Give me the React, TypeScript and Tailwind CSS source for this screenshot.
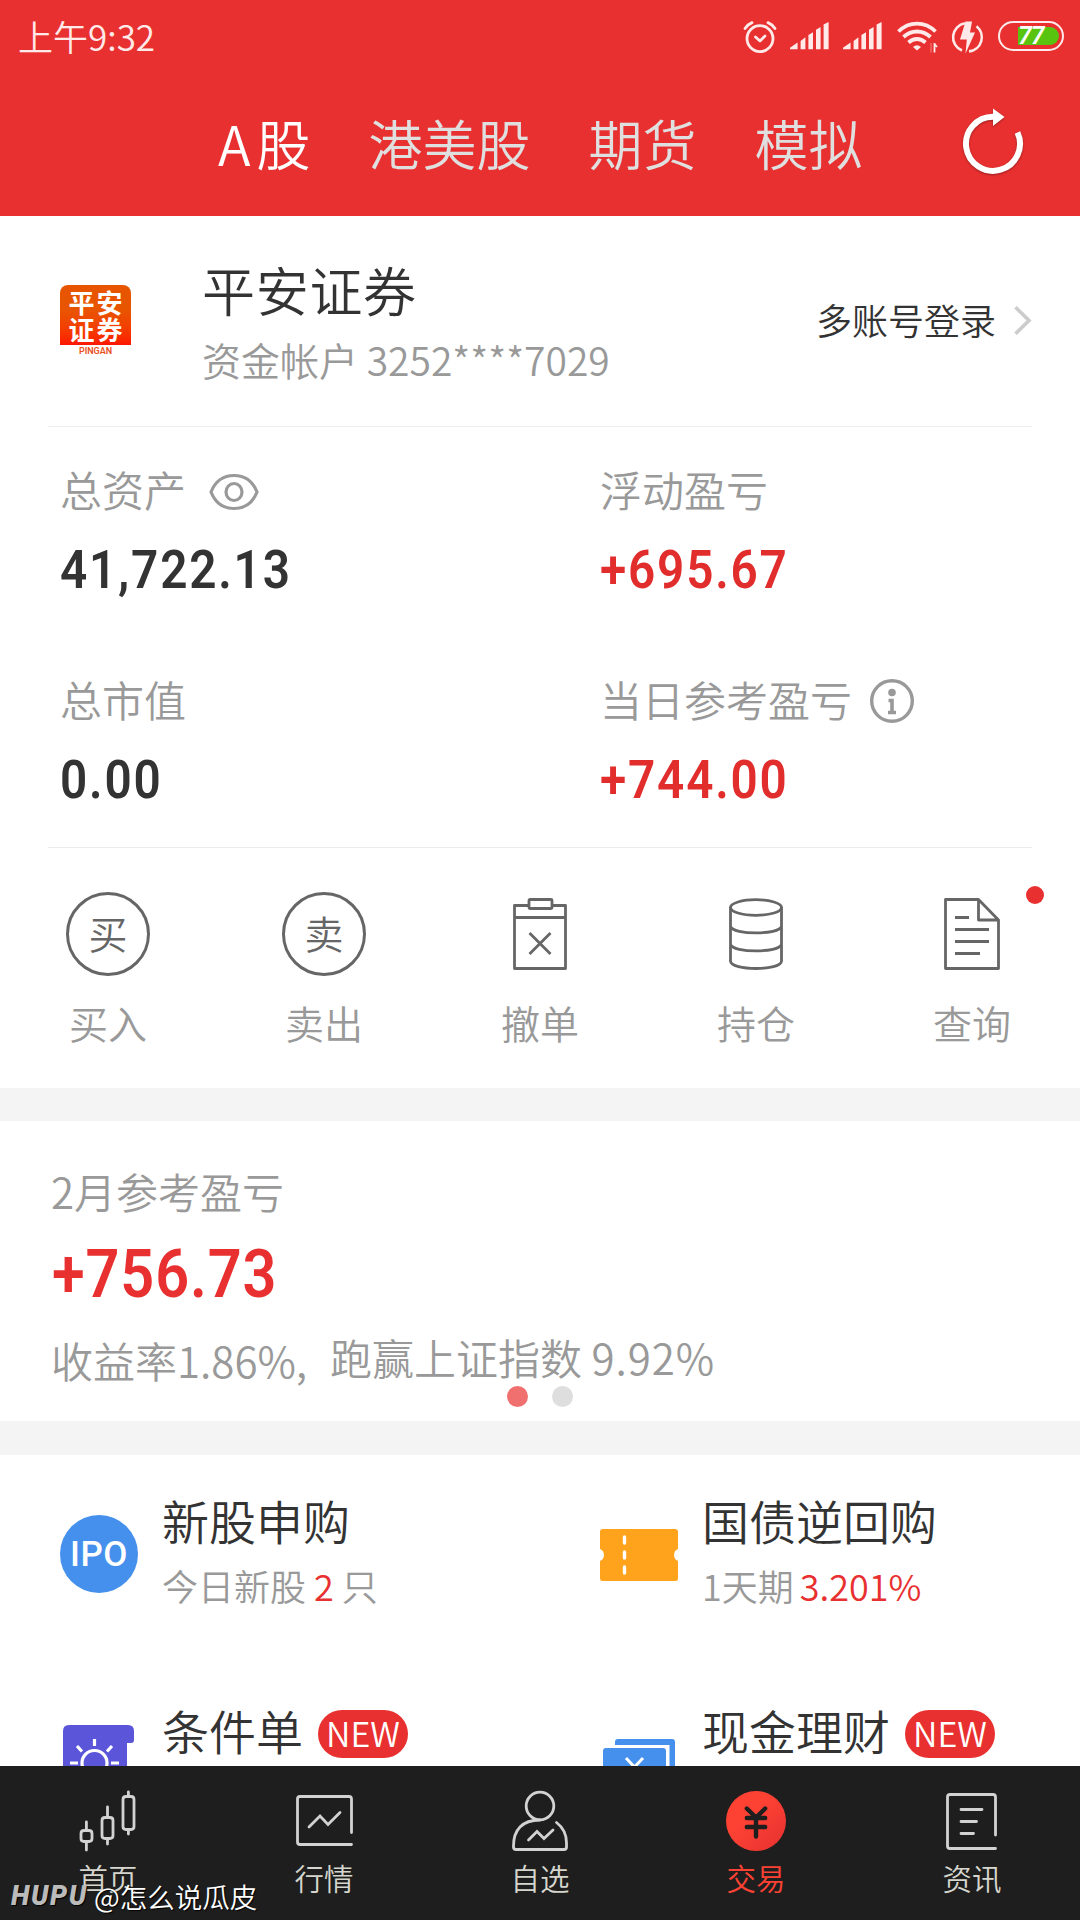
import type { ReactNode } from "react";

const tabs = ["港美股", "期货", "模拟"];

function SignalIcon() {
  return (
    <svg width="39" height="28" viewBox="0 0 39 28" fill="#ffe9e9">
      <path d="M0 27.2V25.8L7.6 20.5V27.2ZM10.6 27.2V19L15.4 15.3V27.2ZM18.4 27.2V13L23 10.3V27.2ZM26 27.2V7.8L30.6 5V27.2ZM33.6 27.2V2.4L38.6 0V27.2Z" />
    </svg>
  );
}

function StatusBar() {
  return (
    <div className="flex h-[72px] items-start justify-between pl-[18px] pr-4">
      <span className="pt-[6px] text-[35px] leading-[60px] text-[#ffe9e9]">上午9:32</span>
      <div className="flex h-[72px] items-start pt-5">
        <svg className="mr-[13px]" width="34" height="36" viewBox="0 0 34 36" fill="none" stroke="#ffe9e9" strokeWidth="2.8" strokeLinecap="round" strokeLinejoin="round">
          <circle cx="17" cy="18.6" r="13" />
          <path d="M2 8.5Q4.5 4.5 9 2.6M32 8.5Q29.5 4.5 25 2.6M12.5 17L17 21L22 16" />
        </svg>
        <div className="mr-[15px] mt-[2px] flex gap-[14px]">
          <SignalIcon />
          <SignalIcon />
        </div>
        <svg className="mr-[13px]" width="41" height="36" viewBox="0 0 41 36" fill="none" stroke="#ffe9e9" strokeWidth="3.8">
          <path d="M1.5 11.5Q9.5 3.6 20 3.6T38.5 11.5M6.5 17Q12.5 11.5 20 11.5T33.5 17M11.5 22.5Q15.5 19 20 19T28.5 22.5" />
          <path d="M16 27Q20 23.4 24 27L20 30.6Z" fill="#ffe9e9" stroke="none" />
          <path d="M37.5 23V32.5M37.5 24L40 27" strokeWidth="1.8" />
          <path d="M34 23V32.5" strokeWidth="1.5" strokeOpacity="0.3" />
        </svg>
        <svg className="mr-[14px]" width="33" height="36" viewBox="0 0 33 36">
          <path d="M14 3.3A14.2 14.2 0 0 0 11 30.5M18 31.4A14.2 14.2 0 0 0 25.5 6.2" fill="none" stroke="#ffe9e9" strokeWidth="2.6" />
          <path d="M14.5 1.5H21L19 12.5H24L14.5 33.5L15.8 19.5H9Z" fill="#ffe9e9" />
        </svg>
        <div className="mt-px flex h-[30px] w-[66px] items-center justify-end rounded-full border-[2.5px] border-[#ffe9e9] pr-[3px]">
          <div className="flex h-[18px] w-[41px] items-center rounded-l-[3px] rounded-r-full bg-[#58c410]">
            <span className="font-[Roboto] text-[25px] font-semibold italic leading-[18px] tracking-[-1px] text-white">77</span>
          </div>
        </div>
      </div>
    </div>
  );
}

function Header() {
  return (
    <header className="h-[216px] bg-[#e93030]">
      <StatusBar />
      <div className="flex h-36 pl-[218px] text-[54px] leading-[80px]">
        <nav className="flex gap-[58px] pt-[31px]">
          <span className="whitespace-nowrap text-white"><span className="tracking-[6px]">A</span>股</span>
          {tabs.map((tab) => (
            <span key={tab} className="whitespace-nowrap text-[#dfdfdf]">{tab}</span>
          ))}
        </nav>
        <svg className="ml-[94px] mt-[34px] drop-shadow-[0_1px_1px_rgba(0,0,0,0.35)]" width="72" height="72" viewBox="0 0 72 72">
          <path d="M36 10.8A27 27 0 1 0 60.5 26.5" fill="none" stroke="white" strokeWidth="6" />
          <path d="M36 2.5L47.5 11L36 20Z" fill="white" />
        </svg>
      </div>
    </header>
  );
}

function Account() {
  return (
    <section className="mx-12 flex h-[211px] border-b border-[#ececec] pl-3">
      <div className="mt-[69px] w-[71px]">
        <div className="flex h-[60px] flex-col items-center justify-center rounded-t-lg bg-gradient-to-b from-[#e85500] from-40% to-[#fd1500] pl-[2px] text-[26px] font-bold leading-[27px] tracking-[2px] text-white">
          <span>平安</span>
          <span>证券</span>
        </div>
        <div className="text-center font-[Roboto] text-[9px] font-semibold leading-3 text-[#e8501c]">PINGAN</div>
      </div>
      <div className="ml-[71px] flex-1 pt-[43px]">
        <h1 className="text-[53px] leading-[60px] tracking-[0.7px] text-[#333]">平安证券</h1>
        <p className="mt-[15px] text-[39px] leading-[50px] text-[#999]">资金帐户 3252****7029</p>
      </div>
      <div className="mt-[83px] flex h-10 gap-[18px] text-[36px] leading-10 text-[#333]">
        多账号登录
        <svg className="mt-[7px]" width="18" height="29" viewBox="0 0 18 29" fill="none" stroke="#ccc" strokeWidth="3.6">
          <path d="M1.5 1.2L15 14.5L1.5 27.8" />
        </svg>
      </div>
    </section>
  );
}

interface StatProps {
  label: string;
  value: string;
  up?: boolean;
  icon?: ReactNode;
}

function Stat({ label, value, up, icon }: StatProps) {
  return (
    <div className="h-[210px] pl-3 pt-8">
      <div className="flex h-[60px] items-center text-[42px] leading-[60px] text-[#999]">
        {label}
        {icon}
      </div>
      <div className={`mt-[21px] w-max origin-left scale-x-90 font-[Roboto] text-[53px] font-semibold leading-[60px] tracking-[2px] ${up ? "text-[#e22d2d]" : "text-[#333]"}`}>
        {value}
      </div>
    </div>
  );
}

function EyeIcon() {
  return (
    <svg className="ml-[23px] mt-[6px]" width="50" height="38" viewBox="0 0 50 38" fill="none" stroke="#999" strokeWidth="3.2">
      <path d="M2 19C6 9 14 2.5 25 2.5S44 9 48 19C44 29 36 35.5 25 35.5S6 29 2 19Z" />
      <ellipse cx="25" cy="19" rx="8" ry="8.5" />
    </svg>
  );
}

function InfoIcon() {
  return (
    <svg className="ml-[18px] mt-1" width="44" height="44" viewBox="0 0 44 44" fill="none" stroke="#999">
      <circle cx="22" cy="22" r="20.3" strokeWidth="3.4" />
      <circle cx="22" cy="13.5" r="3.8" fill="#999" stroke="none" />
      <path d="M18.5 21.5H22V33M18 33.5H26" strokeWidth="3.6" />
    </svg>
  );
}

function Stats() {
  return (
    <section className="mx-12 grid h-[421px] grid-cols-[540px_1fr] border-b border-[#ececec]">
      <Stat label="总资产" value="41,722.13" icon={<EyeIcon />} />
      <Stat label="浮动盈亏" value="+695.67" up />
      <Stat label="总市值" value="0.00" />
      <Stat label="当日参考盈亏" value="+744.00" up icon={<InfoIcon />} />
    </section>
  );
}

function CircleGlyph({ children }: { children: string }) {
  return (
    <div className="flex size-[84px] items-center justify-center rounded-full border-[3px] border-[#666] pb-[3px] text-[39px] leading-none text-[#666]">
      {children}
    </div>
  );
}

const actions = [
  { label: "买入", icon: <CircleGlyph>买</CircleGlyph> },
  { label: "卖出", icon: <CircleGlyph>卖</CircleGlyph> },
  {
    label: "撤单",
    icon: (
      <svg width="56" height="74" viewBox="0 0 56 74" fill="none" stroke="#666" strokeWidth="2.8" strokeLinejoin="round">
        <path d="M17 8.5H2.5V71.5H53.5V8.5H40M2.5 20.5H53.5" />
        <rect x="17" y="2.5" width="23" height="9" rx="1" />
        <path d="M17.5 36L38.5 57M38.5 36L17.5 57" />
      </svg>
    ),
  },
  {
    label: "持仓",
    icon: (
      <svg width="56" height="74" viewBox="0 0 56 74" fill="none" stroke="#666" strokeWidth="2.8">
        <ellipse cx="28" cy="10.5" rx="25.5" ry="7.8" />
        <path d="M2.5 10V64C2.5 74 53.5 74 53.5 64V10M2.5 29.5C5 38 51 38 53.5 29.5M2.5 47.5C5 56 51 56 53.5 47.5" />
      </svg>
    ),
  },
  {
    label: "查询",
    icon: (
      <svg width="56" height="74" viewBox="0 0 56 74" fill="none" stroke="#666" strokeWidth="2.8" strokeLinejoin="round">
        <path d="M1.5 2.5H34.5L54.5 23V71.5H1.5ZM34.5 2.5V23H54.5M11 20.5H25M11 32.5H45M11 44.5H45M11 56.5H36" />
      </svg>
    ),
  },
];

function Actions() {
  return (
    <section className="relative grid h-60 grid-cols-5 pt-[43px]">
      {actions.map(({ label, icon }) => (
        <div key={label} className="flex flex-col items-center">
          <div className="flex h-[86px] items-center">{icon}</div>
          <span className="mt-5 text-[39px] leading-[50px] text-[#999]">{label}</span>
        </div>
      ))}
      <span className="absolute right-9 top-[38px] size-[18px] rounded-full bg-[#e93030]" />
    </section>
  );
}

function MonthProfit() {
  return (
    <section className="relative h-[300px] pl-[51px] pt-10 text-[42px] leading-[60px] text-[#999]">
      <div>2月参考盈亏</div>
      <div className="mt-[14px] w-max origin-left scale-x-90 pl-px font-[Roboto] text-[66px] font-semibold leading-[80px] tracking-[1px] text-[#e93030]">+756.73</div>
      <div className="mt-[15px] flex">
        <span className="w-[279px] whitespace-nowrap">收益率1.86%,</span>
        <span className="-mt-[3px] whitespace-nowrap">跑赢上证指数 <span className="tracking-[1px]">9.92%</span></span>
      </div>
      <div className="absolute bottom-[14px] left-[507px] flex gap-6">
        <span className="size-[21px] rounded-full bg-[#f07070]" />
        <span className="size-[21px] rounded-full bg-[#dedede]" />
      </div>
    </section>
  );
}

interface ServiceProps {
  title: string;
  icon: ReactNode;
  isNew?: boolean;
  children?: ReactNode;
}

function Service({ title, icon, isNew, children }: ServiceProps) {
  return (
    <div className="flex h-[210px] pl-[60px]">
      <div className="w-[102px] pt-[60px]">{icon}</div>
      <div className="pt-[35px]">
        <div className="flex items-center gap-[15px] text-[47px] leading-[60px] text-[#333]">
          {title}
          {isNew && (
            <span className="mt-[7px] h-12 w-[90px] rounded-full bg-[#e93030] text-center text-[34px] leading-[45px] text-white">NEW</span>
          )}
        </div>
        <div className="mt-[10px] text-[36px] leading-[50px] text-[#999]">{children}</div>
      </div>
    </div>
  );
}

function TicketIcon() {
  return (
    <svg className="mt-1" width="78" height="52" viewBox="0 0 79 52" preserveAspectRatio="none">
      <path d="M2.5 0H76.5Q79 0 79 2.5V20A6.5 6.5 0 0 0 79 32V49.5Q79 52 76.5 52H2.5Q0 52 0 49.5V32A6.5 6.5 0 0 0 0 20V2.5Q0 0 2.5 0Z" fill="#ffa31c" />
      <path d="M24.8 8V14M24.8 23V29M24.8 38V44" stroke="white" strokeWidth="3.4" strokeLinecap="round" />
    </svg>
  );
}

function ConditionIcon() {
  return (
    <svg className="ml-[3px]" width="71" height="80" viewBox="0 0 71 80">
      <path d="M6 0H65Q71 0 71 6V15Q71 18 68 18H64V80H0V6Q0 0 6 0Z" fill="#5a55d9" />
      <g fill="none" stroke="white" strokeWidth="3.2">
        <circle cx="31.5" cy="38" r="12.5" />
        <path d="M31.5 14V21M14 21L19 26.5M49 21L44 26.5M7 38H15M48 38H56" />
      </g>
    </svg>
  );
}

function CashIcon() {
  return (
    <svg className="ml-[3px] mt-[14px]" width="72" height="66" viewBox="0 0 72 66">
      <path d="M12 6V3Q12 0 15 0H69Q72 0 72 3V60H66.5V6Z" fill="#4490ec" />
      <path d="M3 9H60Q63 9 63 12V66H0V12Q0 9 3 9Z" fill="#4490ec" />
      <path d="M23 19L31.5 28L40 19M22 28.5H41M31.5 28V45" fill="none" stroke="white" strokeWidth="3" />
    </svg>
  );
}

function Services() {
  return (
    <section className="grid h-[311px] grid-cols-2 content-start overflow-hidden">
      <Service
        title="新股申购"
        icon={
          <div className="flex size-[78px] items-center justify-center rounded-full bg-[#4490ec] font-[Roboto] text-[35px] font-medium leading-none tracking-[0.5px] text-white">
            IPO
          </div>
        }
      >
        今日新股 <span className="text-[#e93030]">2</span> 只
      </Service>
      <Service title="国债逆回购" icon={<div className="pt-[10px]"><TicketIcon /></div>}>
        <span className="-mr-[2px]">1天期</span> <span className="text-[#e93030]">3.201%</span>
      </Service>
      <Service title="条件单" icon={<ConditionIcon />} isNew />
      <Service title="现金理财" icon={<CashIcon />} isNew />
    </section>
  );
}

const navItems = [
  {
    label: "首页",
    icon: <path d="M10.4 33V41M10.4 53V61M31.5 18V27M31.5 50V55M52.4 3V7M52.4 41V45M8 41.5H13Q16 41.5 16 44.5V49.5Q16 52.5 13 52.5H8Q5 52.5 5 49.5V44.5Q5 41.5 8 41.5ZM29 28.5H34Q37 28.5 37 31.5V46.5Q37 49.5 34 49.5H29Q26 49.5 26 46.5V31.5Q26 28.5 29 28.5ZM50 7.5H55Q58 7.5 58 10.5V37.5Q58 40.5 55 40.5H50Q47 40.5 47 37.5V10.5Q47 7.5 50 7.5Z" />,
  },
  {
    label: "行情",
    icon: <path d="M59.5 43.5V10Q59.5 7.5 57 7.5H8Q5.5 7.5 5.5 10V53Q5.5 55.5 8 55.5H59.5M17 38L28 27L36 35.5L48 23.5" />,
  },
  {
    label: "自选",
    icon: (
      <>
        <circle cx="32" cy="17" r="13.8" />
        <path d="M32 31C14 31 5.5 41 5.5 57V58Q5.5 60.5 8 60.5H56Q58.5 60.5 58.5 58V54Q58.5 41 48.5 33.5M20.5 51L29 42.5L36 49.5L45 41" />
      </>
    ),
  },
  {
    label: "交易",
    active: true,
    icon: (
      <>
        <defs>
          <linearGradient id="trade" x1="0" y1="0" x2="1" y2="1">
            <stop offset="0.4" stopColor="#fd4234" />
            <stop offset="1" stopColor="#e63030" />
          </linearGradient>
        </defs>
        <circle cx="32" cy="32" r="30" fill="url(#trade)" stroke="none" />
        <path d="M22.8 19.5L32 28.5L41.2 19.5M22.8 29H41.2M22.8 38H41.2M32 29V47.5" stroke="#1e1e1e" strokeWidth="4.4" />
      </>
    ),
  },
  {
    label: "资讯",
    icon: <path d="M55.5 46V8Q55.5 5.5 53 5.5H10Q7.5 5.5 7.5 8V57Q7.5 59.5 10 59.5H55.5M21 20.5H42M21 32.5H36.5M21 44.5H33.5" />,
  },
];

function BottomNav() {
  return (
    <footer className="relative grid h-[154px] grid-cols-5 bg-[#1e1e1e] pt-[23px]">
      {navItems.map(({ label, icon, active }) => (
        <div key={label} className="flex flex-col items-center">
          <svg width="64" height="64" viewBox="0 0 64 64" fill="none" stroke="#d2d2d2" strokeWidth="2.8" strokeLinecap="round">
            {icon}
          </svg>
          <span className={`mt-1 text-[29.5px] leading-10 ${active ? "text-[#fd4234]" : "text-[#d6d6ce]"}`}>{label}</span>
        </div>
      ))}
      {/* Watermark */}
      <div className="absolute bottom-1 left-[11px] flex items-center leading-10 [text-shadow:1px_1px_1px_#000]">
        <span className="w-[83px] font-[Roboto] text-[27px] font-black italic tracking-[1.6px] text-[#bbb]">HUPU</span>
        <span className="whitespace-nowrap text-[27.5px] text-white">@怎么说瓜皮</span>
      </div>
    </footer>
  );
}

export default function App() {
  return (
    <div className="h-[1920px] w-[1080px] overflow-hidden bg-white font-['Noto_Sans_CJK_SC',sans-serif] font-[350]">
      <Header />
      <Account />
      <Stats />
      <Actions />
      <div className="h-[33px] bg-[#f4f4f4]" />
      <MonthProfit />
      <div className="h-[34px] bg-[#f4f4f4]" />
      <Services />
      <BottomNav />
    </div>
  );
}
